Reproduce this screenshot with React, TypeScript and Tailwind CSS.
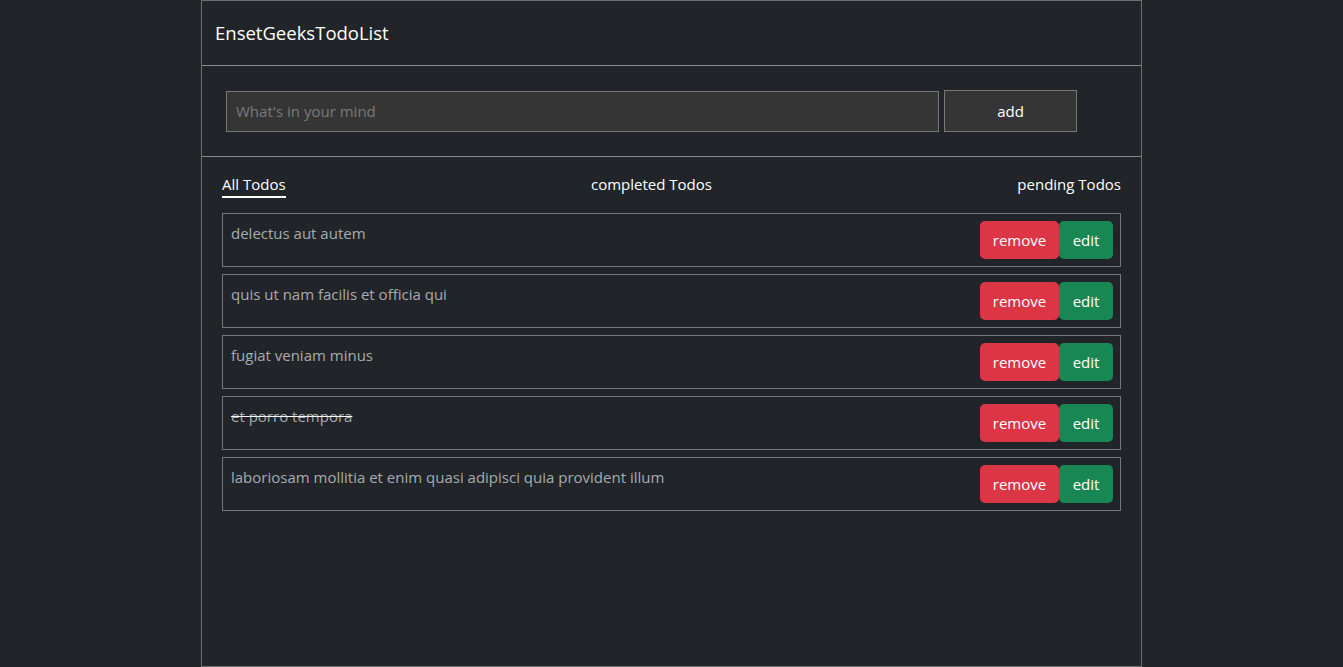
import { useState } from "react"

type Todo = { id: number; title: string; completed: boolean }

const initialTodos: Todo[] = [
  { id: 1, title: "delectus aut autem", completed: false },
  { id: 2, title: "quis ut nam facilis et officia qui", completed: false },
  { id: 3, title: "fugiat veniam minus", completed: false },
  { id: 4, title: "et porro tempora", completed: true },
  { id: 5, title: "laboriosam mollitia et enim quasi adipisci quia provident illum", completed: false },
]

const tabs = ["All Todos", "completed Todos", "pending Todos"]

export default function App() {
  const [todos] = useState(initialTodos)
  const [tab, setTab] = useState(0)

  return (
    <div className="min-h-screen bg-[#212529] font-['Open_Sans','Noto_Sans',sans-serif] text-white">
      <div className="mx-auto flex min-h-screen w-[941px] flex-col border border-[#6f6f6f]">
        <header className="flex h-[65px] items-center border-b border-[#8a8a8a] px-[13px]">
          <h1 className="text-[18.5px]">EnsetGeeksTodoList</h1>
        </header>

        <form className="flex h-[91px] items-center gap-[5px] border-b border-[#8a8a8a] pl-[24px]">
          <input
            placeholder="What's in your mind"
            className="h-[41px] w-[713px] border border-[#777] bg-[#353535] px-[9px] text-[15px] text-white placeholder:text-[#7a7a7a] outline-none"
          />
          <button type="button" className="h-[42px] w-[133px] border border-[#777] bg-[#353535] text-[15px]">
            add
          </button>
        </form>

        <div className="px-[20px] pt-[15px]">
          <nav className="flex justify-between text-[15px]">
            {tabs.map((t, i) => (
              <button
                key={t}
                onClick={() => setTab(i)}
                className={i === tab ? "border-b-2 border-white leading-[24px]" : "border-b-2 border-transparent leading-[24px]"}
              >
                {t}
              </button>
            ))}
          </nav>

          <ul className="mt-[15px] flex flex-col gap-[7px]">
            {todos.map((todo) => (
              <li key={todo.id} className="flex h-[54px] justify-between border border-[#777] pl-[8px] pr-[7px] pt-[7px]">
                <span className={todo.completed ? "text-[15px] leading-[24px] text-[#a7abaf] line-through decoration-white" : "text-[15px] leading-[24px] text-[#a7abaf]"}>
                  {todo.title}
                </span>
                <div className="flex items-start">
                  <button className="h-[38px] w-[79px] rounded-[5px] bg-[#dc3545] text-[15px]">remove</button>
                  <button className="h-[38px] w-[54px] rounded-[5px] bg-[#198754] text-[15px]">edit</button>
                </div>
              </li>
            ))}
          </ul>
        </div>
      </div>
    </div>
  )
}
